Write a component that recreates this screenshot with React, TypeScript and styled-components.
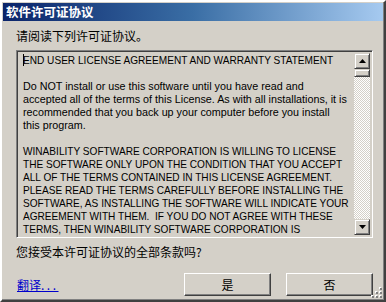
import React from "react";
import styled, { createGlobalStyle } from "styled-components";

const GlobalStyle = createGlobalStyle`
  html, body {
    margin: 0;
    padding: 0;
    background: #d4d0c8;
  }
  * {
    box-sizing: border-box;
  }
`;

// caps lines are set a bit smaller, the original font has narrow capitals
const licenseLines = [
  { text: "END USER LICENSE AGREEMENT AND WARRANTY STATEMENT", caps: true },
  { text: "" },
  { text: "Do NOT install or use this software until you have read and" },
  { text: "accepted all of the terms of this License. As with all installations, it is" },
  { text: "recommended that you back up your computer before you install" },
  { text: "this program." },
  { text: "" },
  { text: "WINABILITY SOFTWARE CORPORATION IS WILLING TO LICENSE", caps: true },
  { text: "THE SOFTWARE ONLY UPON THE CONDITION THAT YOU ACCEPT", caps: true },
  { text: "ALL OF THE TERMS CONTAINED IN THIS LICENSE AGREEMENT.", caps: true },
  { text: "PLEASE READ THE TERMS CAREFULLY BEFORE INSTALLING THE", caps: true },
  { text: "SOFTWARE, AS INSTALLING THE SOFTWARE WILL INDICATE YOUR", caps: true },
  { text: "AGREEMENT WITH THEM.  IF YOU DO NOT AGREE WITH THESE", caps: true },
  { text: "TERMS, THEN WINABILITY SOFTWARE CORPORATION IS", caps: true },
];

const cjk = `"Noto Sans CJK SC", "Liberation Sans", sans-serif`;

const Window = styled.div`
  width: 386px;
  height: 302px;
  display: flex;
  flex-direction: column;
  background: #d4d0c8;
  border-style: solid;
  border-width: 2px;
  border-color: #ffffff #404040 #404040 #ffffff;
  box-shadow: inset -1px -1px 0 #808080, inset 1px 1px 0 #d4d0c8;
  padding: 1px;
  position: relative;
`;

const TitleBar = styled.div`
  height: 18px;
  display: flex;
  align-items: center;
  padding-left: 3px;
  background: linear-gradient(90deg, #0a246a 0%, #3a6ea5 50%, #a6caf0 100%);
  color: #ffffff;
  font-family: ${cjk};
  font-weight: bold;
  font-size: 12.5px;
  line-height: 18px;
`;

const Body = styled.div`
  flex: 1;
  display: flex;
  flex-direction: column;
  padding: 0 10px 0 13px;
`;

const Label = styled.div<{ $top: number }>`
  margin-top: ${(p) => p.$top}px;
  font-family: ${cjk};
  font-size: 12px;
  line-height: 16px;
  color: #000000;
`;

const TextBox = styled.div`
  margin-top: 6px;
  width: 357px;
  height: 188px;
  display: flex;
  border-style: solid;
  border-width: 1px;
  border-color: #808080 #ffffff #ffffff #808080;
  box-shadow: inset 1px 1px 0 #404040, inset -1px -1px 0 #d4d0c8;
  background: #d4d0c8;
  padding: 2px;
`;

const LicenseText = styled.div`
  flex: 1;
  overflow: hidden;
  padding: 1px 0 0 4px;
  font-family: "Liberation Sans", Arial, sans-serif;
  color: #000000;
  white-space: pre;
`;

const Line = styled.div<{ $caps?: boolean }>`
  height: 13px;
  line-height: 13px;
  font-size: ${(p) => (p.$caps ? "10.1px" : "10.75px")};
`;

const Caret = styled.span`
  display: inline-block;
  width: 1px;
  height: 12px;
  margin-right: -1px;
  vertical-align: -2px;
  background: #000000;
`;

const ScrollBar = styled.div`
  width: 16px;
  display: flex;
  flex-direction: column;
`;

const Track = styled.div`
  flex: 1;
  background-color: #ffffff;
  background-image: repeating-conic-gradient(#d4d0c8 0 25%, #ffffff 0 50%);
  background-size: 2px 2px;
`;

const ScrollButton = styled.div<{ $h?: number }>`
  height: ${(p) => p.$h ?? 16}px;
  display: flex;
  align-items: center;
  justify-content: center;
  background: #d4d0c8;
  border-style: solid;
  border-width: 1px;
  border-color: #d4d0c8 #404040 #404040 #d4d0c8;
  box-shadow: inset 1px 1px 0 #ffffff, inset -1px -1px 0 #808080;
`;

const Footer = styled.div`
  margin-top: 13px;
  display: flex;
  align-items: center;
`;

const Link = styled.a`
  font-family: ${cjk};
  font-size: 12px;
  color: #0000cc;
  text-decoration: underline;
  margin-left: 1px;
  margin-right: auto;
`;

const Dots = styled.span`
  letter-spacing: 2.5px;
`;

const Button = styled.button`
  width: 87px;
  height: 23px;
  margin-left: 15px;
  padding: 0;
  background: #d4d0c8;
  border-style: solid;
  border-width: 1px;
  border-color: #ffffff #404040 #404040 #ffffff;
  box-shadow: inset -1px -1px 0 #808080;
  font-family: ${cjk};
  font-size: 12px;
  color: #000000;
`;

const Grip = styled.svg`
  position: absolute;
  right: 2px;
  bottom: 2px;
`;

const Arrow = ({ down }: { down?: boolean }) => (
  <svg width="7" height="4" viewBox="0 0 7 4">
    <path d={down ? "M0 0h7L3.5 4z" : "M0 4h7L3.5 0z"} fill="#000" />
  </svg>
);

export default function App() {
  return (
    <>
      <GlobalStyle />
      <Window>
        <TitleBar>软件许可证协议</TitleBar>
        <Body>
          <Label $top={7}>请阅读下列许可证协议。</Label>
          <TextBox>
            <LicenseText>
              {licenseLines.map((line, i) => (
                <Line key={i} $caps={line.caps}>
                  {i === 0 && <Caret />}
                  {line.text || "\u00a0"}
                </Line>
              ))}
            </LicenseText>
            <ScrollBar>
              <ScrollButton>
                <Arrow />
              </ScrollButton>
              <ScrollButton $h={8} />
              <Track />
              <ScrollButton>
                <Arrow down />
              </ScrollButton>
            </ScrollBar>
          </TextBox>
          <Label $top={6}>您接受本许可证协议的全部条款吗?</Label>
          <Footer>
            <Link href="#">
              翻译<Dots>...</Dots>
            </Link>
            <Button>是</Button>
            <Button>否</Button>
          </Footer>
        </Body>
        <Grip width="12" height="12" viewBox="0 0 12 12">
          {[
            [10, 2], [10, 6], [10, 10], [6, 6], [6, 10], [2, 10],
          ].map(([x, y], i) => (
            <g key={i}>
              <rect x={x - 1} y={y - 1} width="2" height="2" fill="#ffffff" />
              <rect x={x} y={y} width="2" height="2" fill="#808080" />
            </g>
          ))}
        </Grip>
      </Window>
    </>
  );
}
